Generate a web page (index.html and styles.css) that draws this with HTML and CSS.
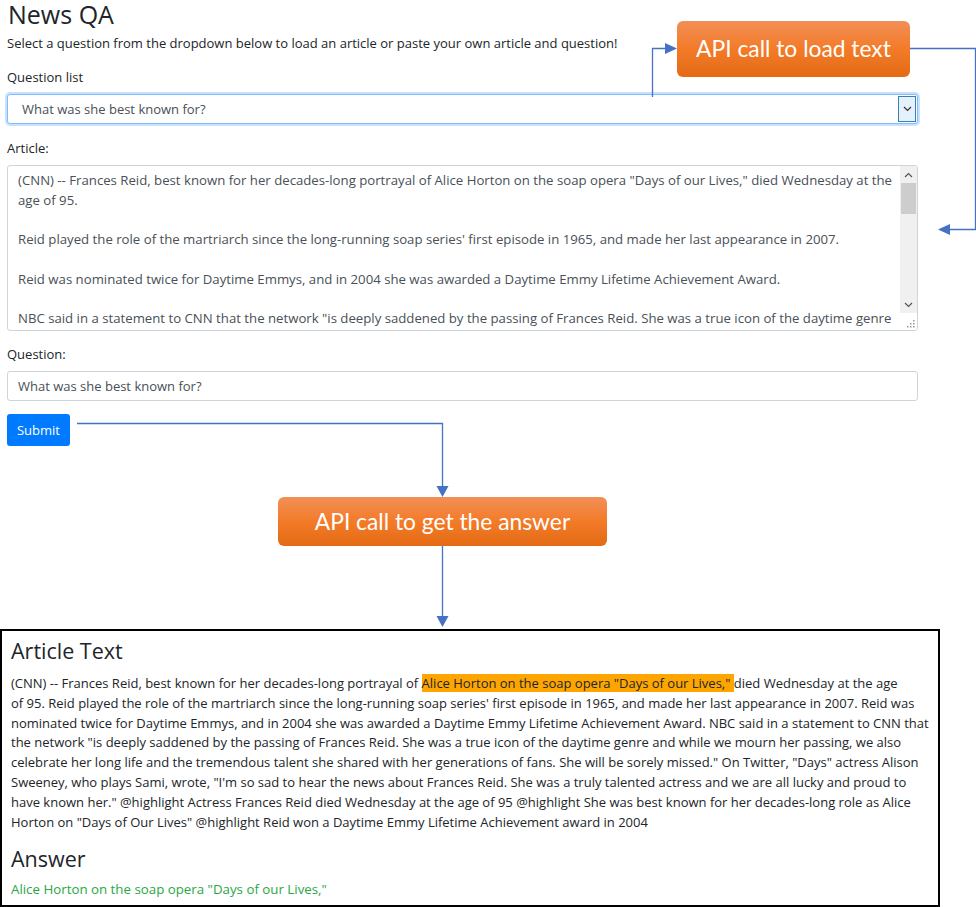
FILE: index.html
```html
<!DOCTYPE html>
<html>
<head>
<meta charset="utf-8">
<title>News QA</title>
<link rel="stylesheet" href="styles.css">
</head>
<body>
<div class="page">
  <main class="form">
    <h3 class="title">News QA</h3>
    <p class="intro">Select a question from the dropdown below to load an article or paste your own article and question!</p>

    <div class="group">
      <label class="lbl">Question list</label>
      <div class="select">
        <span class="select-text">What was she best known for?</span>
        <span class="select-btn">
          <svg width="9" height="6" viewBox="0 0 9 6"><path d="M1 1 L4.5 4.5 L8 1" fill="none" stroke="#333" stroke-width="1.2"/></svg>
        </span>
      </div>
    </div>

    <div class="group group-article">
      <label class="lbl">Article:</label>
      <div class="textarea">
        <div class="ta-text">
          <p>(CNN) -- Frances Reid, best known for her decades-long portrayal of Alice Horton on the soap opera "Days of our Lives," died Wednesday at the age of 95.</p>
          <p>Reid played the role of the martriarch since the long-running soap series' first episode in 1965, and made her last appearance in 2007.</p>
          <p>Reid was nominated twice for Daytime Emmys, and in 2004 she was awarded a Daytime Emmy Lifetime Achievement Award.</p>
          <p>NBC said in a statement to CNN that the network "is deeply saddened by the passing of Frances Reid. She was a true icon of the daytime genre and while we mourn her passing, we also celebrate her long life and the tremendous talent she shared with her generations of fans. She will be sorely missed."</p>
        </div>
        <div class="scrollbar">
          <span class="sb-arrow"><svg width="9" height="6" viewBox="0 0 9 6"><path d="M1 5 L4.5 1.5 L8 5" fill="none" stroke="#555" stroke-width="1.2"/></svg></span>
          <span class="sb-thumb"></span>
          <span class="sb-track"></span>
          <span class="sb-arrow"><svg width="9" height="6" viewBox="0 0 9 6"><path d="M1 1 L4.5 4.5 L8 1" fill="none" stroke="#555" stroke-width="1.2"/></svg></span>
          <span class="sb-grip"><svg width="8" height="8" viewBox="0 0 8 8" fill="#999"><rect x="6" y="0" width="1.5" height="1.5"/><rect x="3" y="3" width="1.5" height="1.5"/><rect x="6" y="3" width="1.5" height="1.5"/><rect x="0" y="6" width="1.5" height="1.5"/><rect x="3" y="6" width="1.5" height="1.5"/><rect x="6" y="6" width="1.5" height="1.5"/></svg></span>
        </div>
      </div>
    </div>

    <div class="group">
      <label class="lbl">Question:</label>
      <div class="input">What was she best known for?</div>
    </div>

    <button class="btn">Submit</button>
  </main>

  <section class="result">
    <h4 class="res-title">Article Text</h4>
    <p class="res-text">(CNN) -- Frances Reid, best known for her decades-long portrayal of <mark class="hl">Alice Horton on the soap opera "Days of our Lives," </mark>died Wednesday at the age<br>of 95. Reid played the role of the martriarch since the long-running soap series' first episode in 1965, and made her last appearance in 2007. Reid was<br>nominated twice for Daytime Emmys, and in 2004 she was awarded a Daytime Emmy Lifetime Achievement Award. NBC said in a statement to CNN that<br>the network "is deeply saddened by the passing of Frances Reid. She was a true icon of the daytime genre and while we mourn her passing, we also<br>celebrate her long life and the tremendous talent she shared with her generations of fans. She will be sorely missed." On Twitter, "Days" actress Alison<br>Sweeney, who plays Sami, wrote, "I'm so sad to hear the news about Frances Reid. She was a truly talented actress and we are all lucky and proud to<br>have known her." @highlight Actress Frances Reid died Wednesday at the age of 95 @highlight She was best known for her decades-long role as Alice<br>Horton on "Days of Our Lives" @highlight Reid won a Daytime Emmy Lifetime Achievement award in 2004</p>
    <h4 class="res-title ans-title">Answer</h4>
    <p class="answer">Alice Horton on the soap opera "Days of our Lives,"</p>
  </section>

  <svg class="diagram" width="976" height="907" viewBox="0 0 976 907">
    <g fill="none" stroke="#4472c4" stroke-width="1.3">
      <path d="M652.5 97 V48.5 H666"/>
      <path d="M910 48.5 H975.5 V229.5 H949"/>
      <path d="M77 423.5 H442.5 V486"/>
      <path d="M442.5 546 V616"/>
    </g>
    <g fill="#4472c4">
      <polygon points="665,43 677,48.5 665,54"/>
      <polygon points="950,224 938,229.5 950,235"/>
      <polygon points="436.5,486 448.5,486 442.5,497"/>
      <polygon points="436.5,616 448.5,616 442.5,627"/>
    </g>
  </svg>
  <div class="callout callout-load">API call to load text</div>
  <div class="callout callout-answer">API call to get the answer</div>
</div>
</body>
</html>
```

FILE: styles.css
```css
* { box-sizing: border-box; }

body {
  margin: 0;
  background: #fff;
  font-family: "Open Sans", "Noto Sans", "Liberation Sans", sans-serif;
  color: #212529;
}

.page {
  position: relative;
  width: 976px;
  height: 907px;
  overflow: hidden;
}

.form {
  width: 918px;
  padding-left: 7px;
}

.title {
  margin: 0;
  padding: 0 0 0 1px;
  font-size: 25px;
  font-weight: 400;
  line-height: 28px;
  color: #212529;
}

.intro {
  margin: 6px 0 0;
  font-size: 13px;
  line-height: 19px;
}

.group {
  margin-top: 15px;
  display: flex;
  flex-direction: column;
}

.group + .group { margin-top: 14px; }
.group-article { padding-top: 1px; }

.lbl {
  font-size: 13px;
  line-height: 19px;
  margin-bottom: 7px;
}

.select {
  height: 30px;
  display: flex;
  align-items: stretch;
  border: 1px solid #80bdff;
  border-radius: 3px;
  box-shadow: 0 0 0 2px rgba(0, 123, 255, 0.22);
  font-size: 13px;
  color: #495057;
  background: #fff;
}

.select-text {
  flex: 1;
  display: flex;
  align-items: center;
  padding-left: 14px;
}

.select-btn {
  width: 18px;
  margin: 1px 1px 1px 0;
  display: flex;
  align-items: center;
  justify-content: center;
  background: #e5f1fb;
  border: 1px solid #3c7fb1;
}

.textarea {
  height: 166px;
  display: flex;
  border: 1px solid #ced4da;
  border-radius: 3px;
  overflow: hidden;
  background: #fff;
}

.ta-text {
  flex: 1;
  height: 164px;
  padding: 5px 0 0 10px;
  font-size: 13.2px;
  line-height: 19.75px;
  color: #495057;
  overflow: hidden;
}

.ta-text p {
  margin: 0 0 19.75px;
}

.scrollbar {
  width: 17px;
  display: flex;
  flex-direction: column;
  background: #f0f0f0;
}

.sb-arrow {
  height: 17px;
  display: flex;
  align-items: center;
  justify-content: center;
}

.sb-thumb {
  height: 31px;
  margin: 0 1px;
  background: #cdcdcd;
}

.sb-track { flex: 1; }

.sb-grip {
  height: 17px;
  background: #fff;
  display: flex;
  align-items: flex-end;
  justify-content: flex-end;
  padding: 0 2px 2px 0;
}

.input {
  height: 30px;
  display: flex;
  align-items: center;
  padding-left: 10px;
  border: 1px solid #ced4da;
  border-radius: 3px;
  font-size: 13px;
  color: #495057;
}

.btn {
  margin-top: 13px;
  width: 63px;
  height: 32px;
  padding: 0;
  border: 0;
  border-radius: 3px;
  background: #007bff;
  color: #fff;
  font-family: inherit;
  font-size: 13px;
}

.result {
  margin-top: 183px;
  width: 940px;
  height: 278px;
  border: 2px solid #000;
  padding: 6px 2px 0 9px;
}

.res-title {
  margin: 0;
  font-size: 21.5px;
  font-weight: 400;
  line-height: 28px;
  color: #212529;
}

.res-text {
  margin: 9px 0 0;
  font-size: 13px;
  line-height: 19.8px;
  color: #212529;
  white-space: nowrap;
}

.hl {
  background: #ffa500;
  color: #212529;
  padding: 0;
}

.ans-title { margin-top: 13px; }

.answer {
  margin: 7px 0 0;
  font-size: 13.3px;
  line-height: 19px;
  color: #28a745;
}

.diagram {
  position: absolute;
  left: 0;
  top: 0;
  pointer-events: none;
}

.callout {
  position: absolute;
  display: flex;
  align-items: center;
  justify-content: center;
  border-radius: 6px;
  background: linear-gradient(#f28f57, #f37b28 50%, #e46a14);
  color: #fff;
  font-family: "Lato", "Open Sans", sans-serif;
  font-size: 22.8px;
  padding-bottom: 2px;
}

.callout-load {
  left: 677px;
  top: 21px;
  width: 233px;
  height: 56px;
}

.callout-answer {
  left: 278px;
  top: 497px;
  width: 329px;
  height: 49px;
}
```
